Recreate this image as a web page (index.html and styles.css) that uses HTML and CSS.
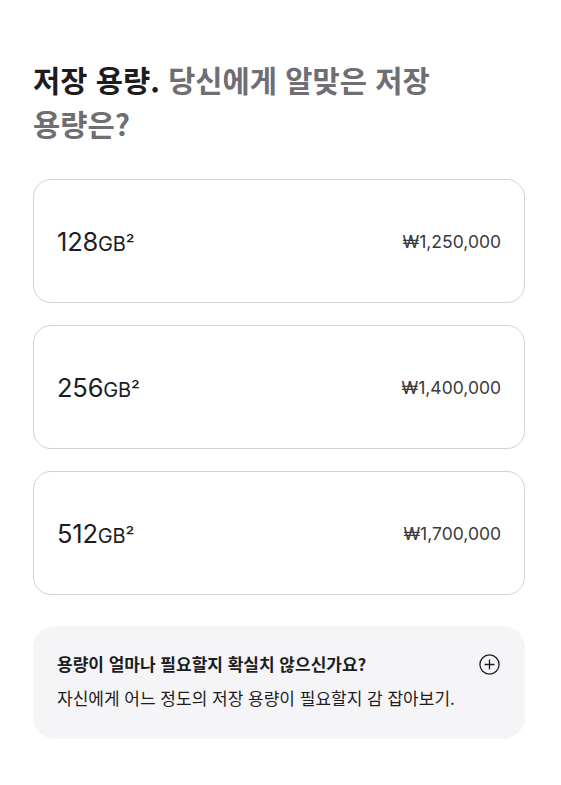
FILE: index.html
```html
<!DOCTYPE html>
<html lang="ko">
<head>
<meta charset="UTF-8">
<meta name="viewport" content="width=device-width, initial-scale=1.0">
<title>저장 용량</title>
<link rel="stylesheet" href="styles.css">
</head>
<body>
<div class="storage-section">
<h2 class="storage-title"><span class="title-strong">저장 용량.</span> 당신에게 알맞은 저장 용량은?</h2>
<div class="option-list">
<div class="option-card">
<span class="option-size">128<span class="unit">GB²</span></span>
<span class="option-price">₩1,250,000</span>
</div>
<div class="option-card">
<span class="option-size">256<span class="unit">GB²</span></span>
<span class="option-price">₩1,400,000</span>
</div>
<div class="option-card">
<span class="option-size">512<span class="unit">GB²</span></span>
<span class="option-price">₩1,700,000</span>
</div>
</div>
<div class="help-box">
<div class="help-head">
<span class="help-title">용량이 얼마나 필요할지 확실치 않으신가요?</span>
<svg class="help-icon" width="21" height="21" viewBox="0 0 21 21" fill="none" stroke="#1d1d1f" stroke-width="1.3">
<circle cx="10.5" cy="10.5" r="9.6"/>
<path d="M10.5 5.5v10M5.5 10.5h10"/>
</svg>
</div>
<p class="help-text">자신에게 어느 정도의 저장 용량이 필요할지 감 잡아보기.</p>
</div>
</div>
</body>
</html>
```

FILE: styles.css
```css
body { margin: 0; background: #fff; font-family: Inter, "Noto Sans CJK KR", sans-serif; color: #1d1d1f; word-break: keep-all; }
.storage-section { padding: 58px 36px 40px 33px; }
.storage-title { margin: 0 0 33px; font-family: "Noto Sans CJK KR", sans-serif; font-size: 29.6px; line-height: 44px; font-weight: 700; color: #6e6e73; }
.title-strong { color: #1d1d1f; }
.option-list { display: flex; flex-direction: column; gap: 22px; }
.option-card { display: flex; justify-content: space-between; align-items: center; height: 122px; padding: 0 23px; border: 1px solid #d2d2d7; border-radius: 18px; }
.option-size { font-size: 25.5px; font-weight: 400; letter-spacing: -0.2px; }
.unit { font-size: 20px; }
.option-price { font-size: 17.5px; color: #3a3a3c; }
.help-box { margin-top: 31px; padding: 26px 24px 29px; background: #f5f5f7; border-radius: 22px; }
.help-head { display: flex; justify-content: space-between; align-items: center; }
.help-title { font-family: "Noto Sans CJK KR", sans-serif; font-size: 17px; font-weight: 700; line-height: 24px; }
.help-icon { margin-right: 1px; }
.help-text { margin: 10px 0 0; font-family: "Noto Sans CJK KR", sans-serif; font-size: 17px; line-height: 24px; color: #1d1d1f; }
```
